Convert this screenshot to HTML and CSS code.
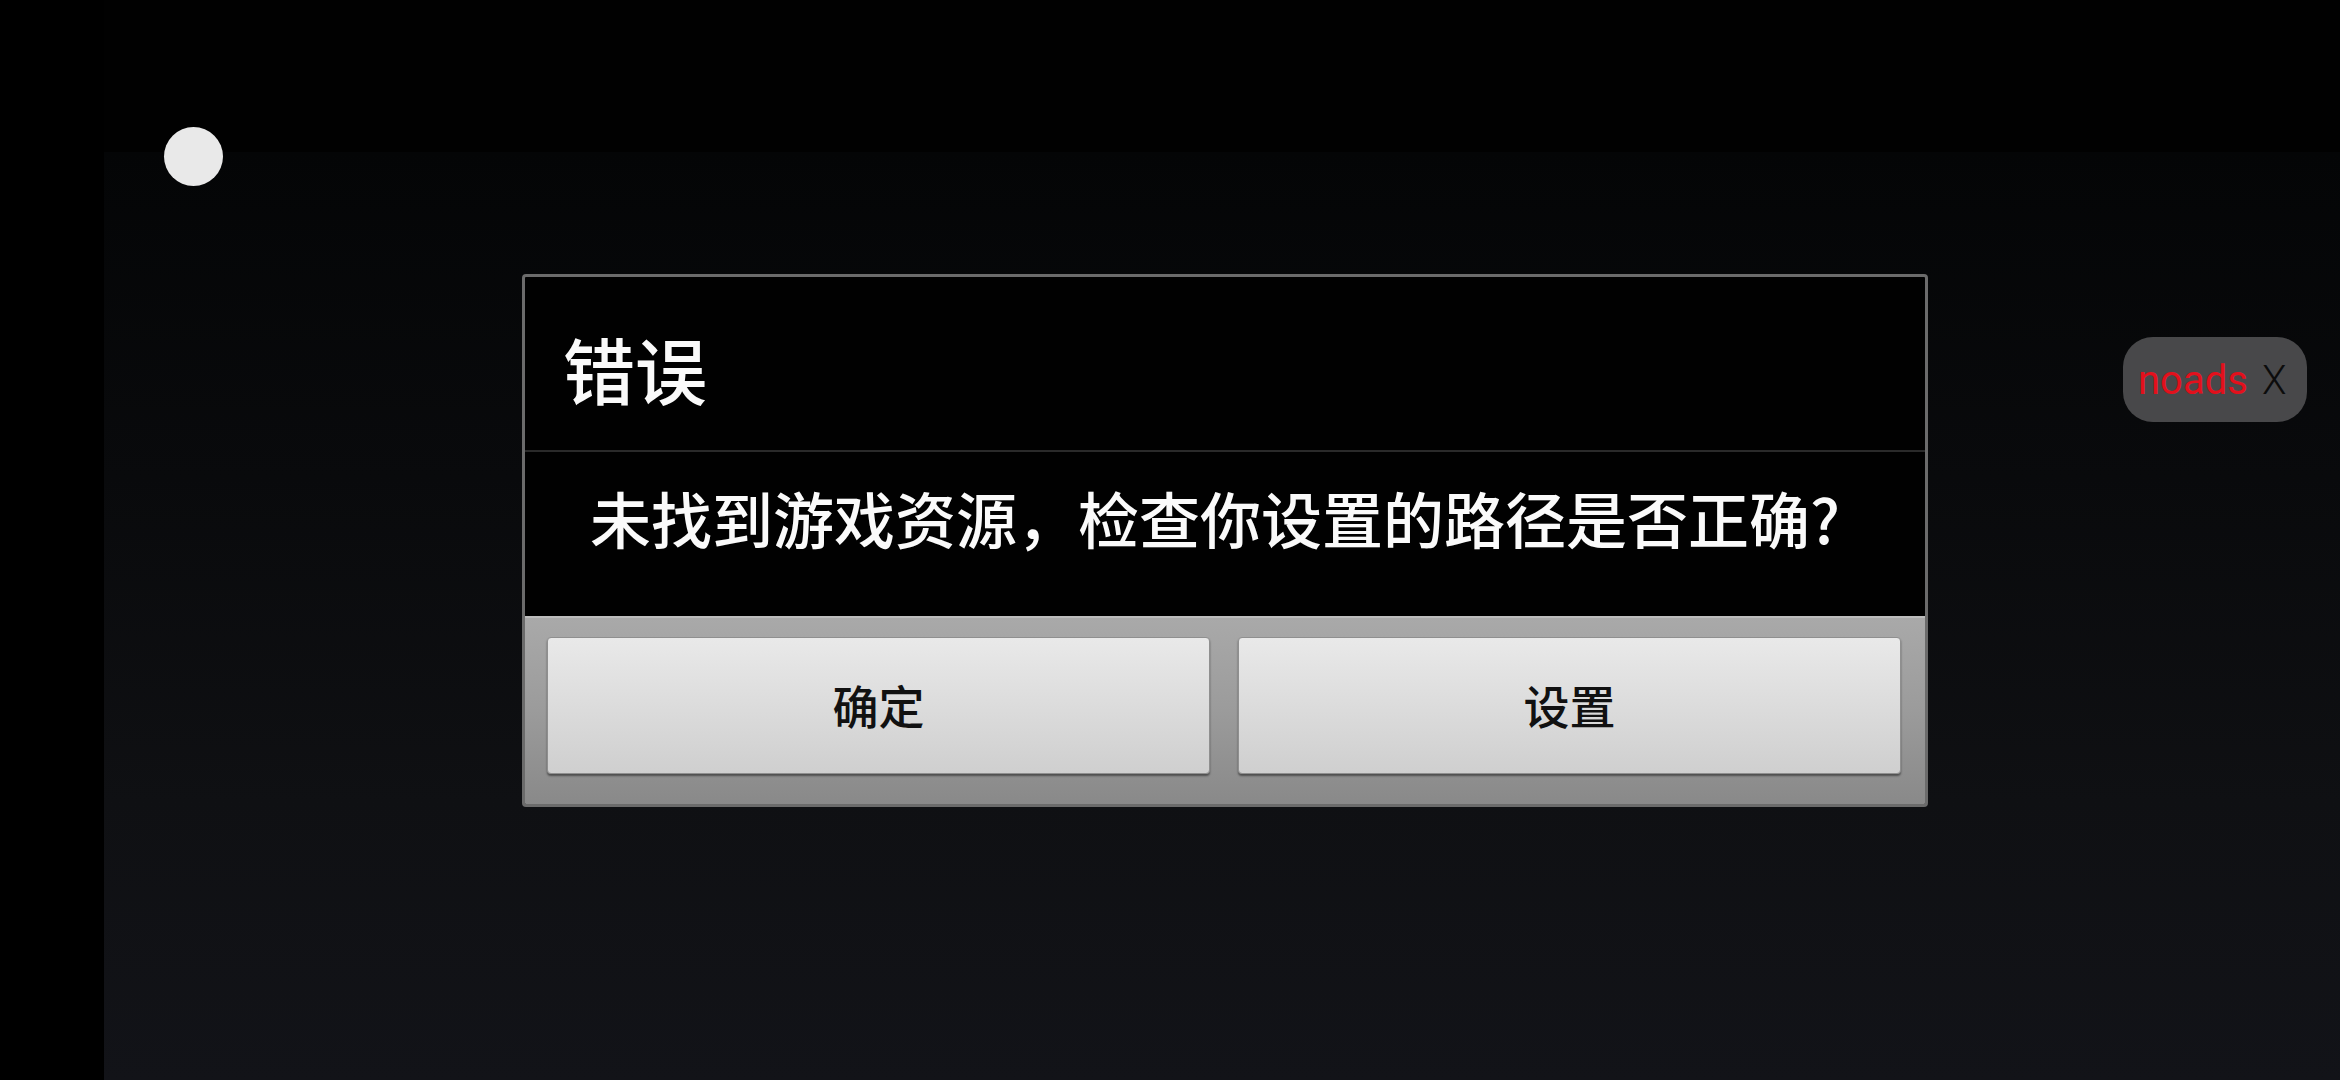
FILE: index.html
```html
<!DOCTYPE html>
<html lang="zh-CN">
<head>
    <meta charset="UTF-8">
    <meta name="viewport" content="width=device-width, initial-scale=1.0">
    <title>错误</title>
    <link rel="stylesheet" href="styles.css">
</head>
<body>
    <div class="screen">
        <div class="rail"></div>
        <div class="stage">
            <div class="status-band"></div>
            <div class="game-area"></div>
        </div>

        <div class="touch-dot"></div>

        <div class="noads">
            <span class="noads-label">noads</span>
            <span class="noads-close">X</span>
        </div>

        <div class="dialog">
            <div class="dialog-header">
                <h1 class="dialog-title">错误</h1>
            </div>
            <div class="dialog-body">
                <p class="dialog-message">未找到游戏资源，检查你设置的路径是否正确?</p>
            </div>
            <div class="dialog-buttons">
                <button class="dialog-btn">确定</button>
                <button class="dialog-btn">设置</button>
            </div>
        </div>
    </div>
</body>
</html>
```

FILE: styles.css
```css
* {
    margin: 0;
    padding: 0;
    box-sizing: border-box;
    font-family: 'Noto Sans CJK SC', 'Noto Sans', sans-serif;
}

body {
    background: #000;
    width: 2340px;
    height: 1080px;
    overflow: hidden;
}

.screen {
    position: relative;
    display: flex;
    width: 2340px;
    height: 1080px;
}

.rail {
    width: 104px;
    background: #000;
}

.stage {
    flex: 1;
    display: flex;
    flex-direction: column;
}

.status-band {
    height: 152px;
    background: #010101;
}

.game-area {
    flex: 1;
    background: linear-gradient(to bottom, #040506 0%, #090a0c 35%, #0f1013 70%, #121318 100%);
}

.touch-dot {
    position: absolute;
    left: 164px;
    top: 127px;
    width: 59px;
    height: 59px;
    border-radius: 50%;
    background: #e9e9e9;
}

.noads {
    position: absolute;
    left: 2123px;
    top: 337px;
    width: 184px;
    height: 85px;
    border-radius: 30px;
    background: #48484a;
    display: flex;
    align-items: center;
    padding: 2px 0 0 15px;
    gap: 14px;
}

.noads-label {
    font-family: Roboto, 'Noto Sans', sans-serif;
    font-size: 40px;
    color: #e3101c;
}

.noads-close {
    font-family: Roboto, 'Noto Sans', sans-serif;
    font-weight: 300;
    font-size: 40px;
    color: #0c0c0c;
}

.dialog {
    position: absolute;
    left: 522px;
    top: 274px;
    width: 1406px;
    height: 533px;
    border: 3px solid #6b6b6b;
    border-radius: 4px;
    background: #010101;
    display: flex;
    flex-direction: column;
    overflow: hidden;
}

.dialog-header {
    height: 175px;
    display: flex;
    align-items: center;
    padding: 8px 0 0 38px;
    border-bottom: 2px solid #2a2a2a;
}

.dialog-title {
    font-size: 72px;
    font-weight: 500;
    color: #fafafa;
    line-height: 1;
}

.dialog-body {
    height: 164px;
    display: flex;
    align-items: center;
    justify-content: center;
    padding: 0 40px 34px 20px;
}

.dialog-message {
    font-size: 61px;
    font-weight: 500;
    color: #fafafa;
    line-height: 1;
    white-space: nowrap;
}

.dialog-buttons {
    flex: 1;
    display: flex;
    gap: 28px;
    padding: 19px 24px 30px 22px;
    background: linear-gradient(to bottom, #a9a9a9 0%, #9b9b9b 50%, #898989 100%);
    border-top: 2px solid #bcbcbc;
}

.dialog-btn {
    flex: 1;
    border: 1px solid #8f8f8f;
    border-radius: 4px;
    background: linear-gradient(to bottom, #e9e9e9 0%, #dcdcdc 50%, #cfcfcf 100%);
    box-shadow: 0 2px 2px rgba(0, 0, 0, 0.45);
    font-size: 46px;
    font-weight: 500;
    color: #111;
    padding-bottom: 4px;
    cursor: pointer;
}
```
